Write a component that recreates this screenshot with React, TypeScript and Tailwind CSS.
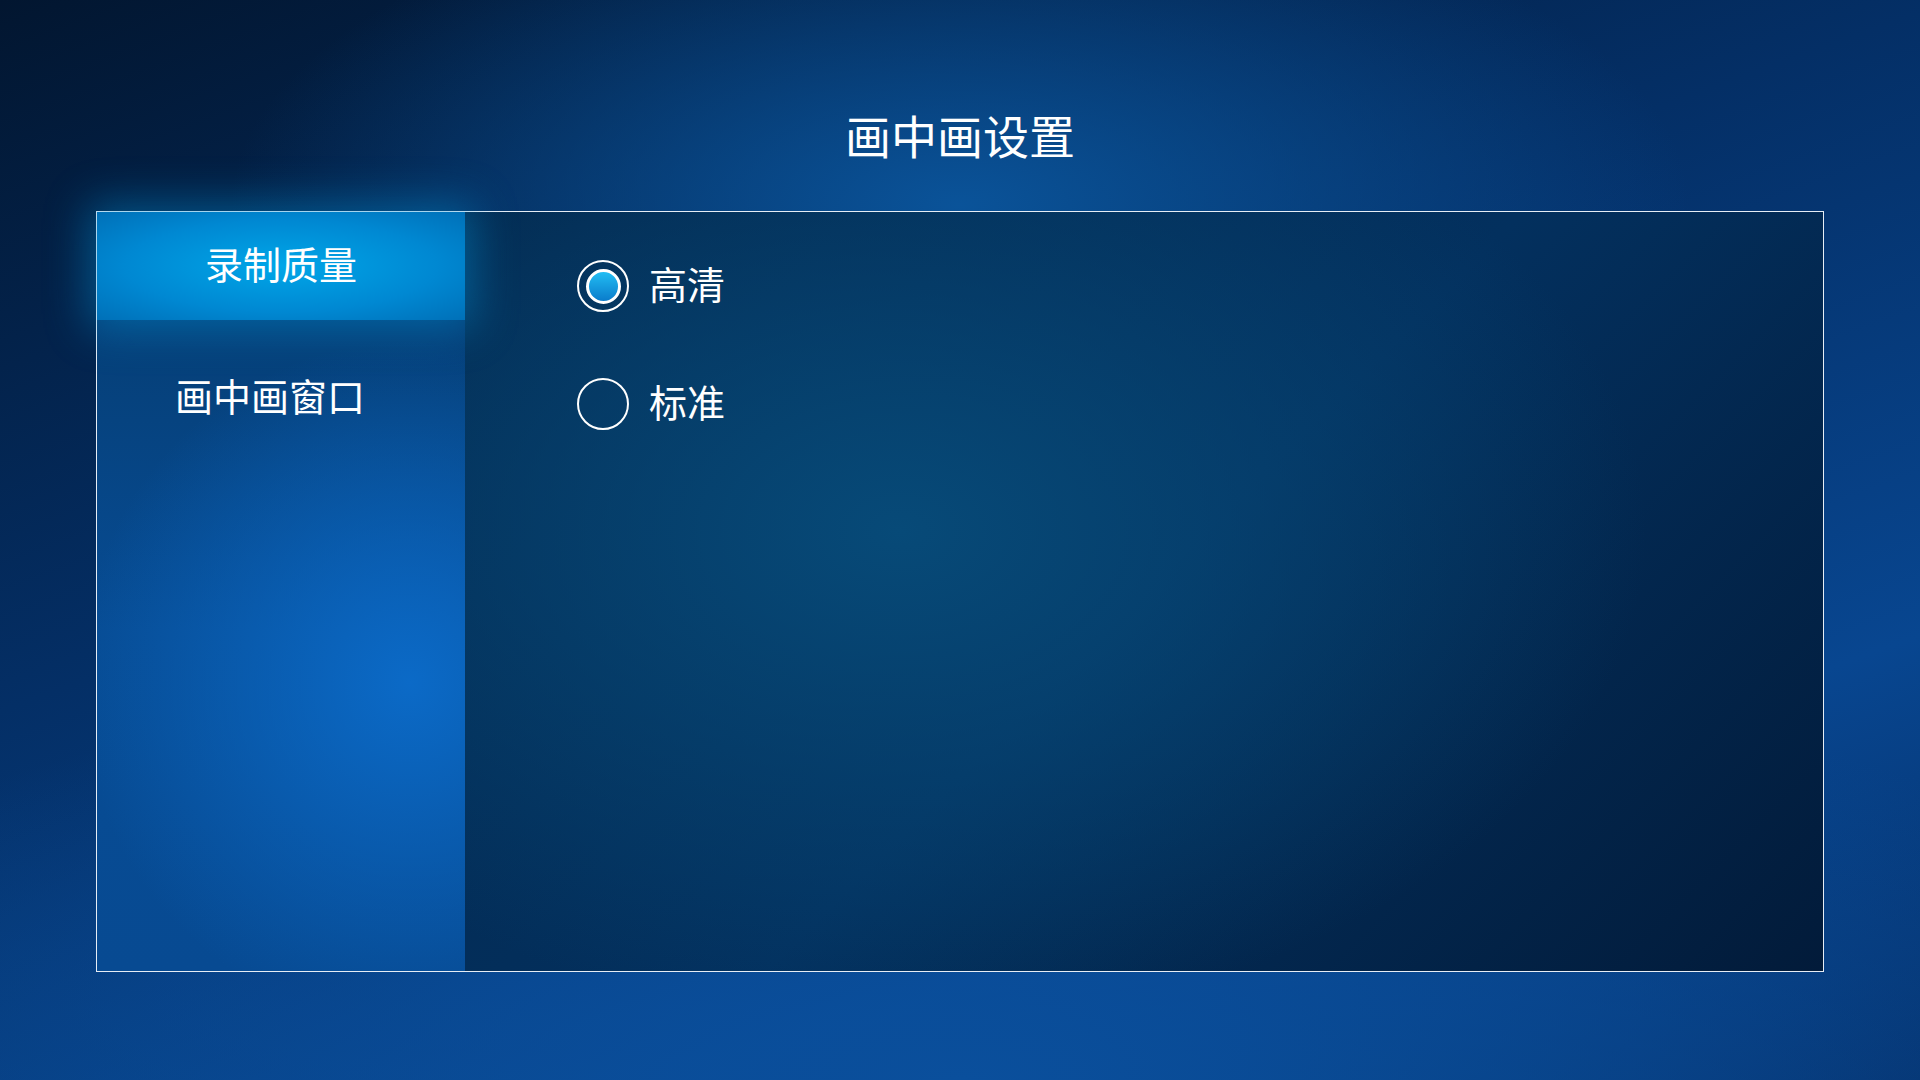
import React, { useState } from 'react';

const FONT = '"Noto Sans CJK SC", "Noto Sans", sans-serif';

const tabs = ['录制质量', '画中画窗口'];
const options = ['高清', '标准'];

const Radio = ({ checked }: { checked: boolean }) => (
  <div className="w-[52px] h-[52px] rounded-full border-[2.5px] border-white flex items-center justify-center shrink-0">
    {checked && (
      <div className="w-[35px] h-[35px] rounded-full border-[3px] border-white bg-[linear-gradient(180deg,#22bdf3_0%,#0a7ccb_100%)]" />
    )}
  </div>
);

const App: React.FC = () => {
  const [tab, setTab] = useState(0);
  const [quality, setQuality] = useState(0);

  return (
    <div
      className="w-[1920px] h-[1080px] overflow-hidden text-white bg-[radial-gradient(ellipse_38%_30%_at_50%_19%,#0a5399_0%,transparent_100%),radial-gradient(ellipse_70%_40%_at_50%_100%,#0a4f9c_0%,transparent_100%),linear-gradient(160deg,#021630_0%,#042f66_40%,#084690_75%,#05306a_100%)]"
      style={{ fontFamily: FONT }}
    >
      <h1 className="pt-[111px] pb-[3px] text-center text-[46px] leading-none font-normal mb-[51px]">画中画设置</h1>

      {/* Panel */}
      <div className="mx-[96px] h-[761px] border border-[#e6edf5] flex">
        {/* Sidebar */}
        <div className="w-[368px] flex flex-col bg-[radial-gradient(ellipse_90%_45%_at_85%_62%,#0b6ac7_0%,transparent_100%),linear-gradient(180deg,#053a6c_0%,#074c94_55%,#074a92_100%)]">
          {tabs.map((t, i) => {
            const active = i === tab;
            return (
              <button
                key={t}
                onClick={() => setTab(i)}
                className={
                  active
                    ? 'relative z-10 h-[108px] w-full flex items-center justify-center pb-[6px] text-[38px] leading-none bg-[radial-gradient(ellipse_at_center,#00a6e8_0%,#0088d2_60%,#0070b8_100%)] shadow-[0_0_44px_8px_rgba(0,150,220,0.45)]'
                    : 'h-[156px] w-full flex items-center justify-center pr-[22px] pb-[6px] text-[38px] leading-none'
                }
              >
                {t}
              </button>
            );
          })}
        </div>

        {/* Content */}
        <div className="flex-1 pl-[112px] pt-[48px] flex flex-col gap-[66px] bg-[radial-gradient(ellipse_55%_65%_at_32%_42%,#074a78_0%,transparent_100%),linear-gradient(135deg,#03284e_0%,#03305e_50%,#021b3a_100%)]">
          {options.map((o, i) => (
            <button key={o} onClick={() => setQuality(i)} className="flex items-center gap-[20px] text-[38px] leading-none">
              <Radio checked={quality === i} />
              <span className="pb-[7px]">{o}</span>
            </button>
          ))}
        </div>
      </div>
    </div>
  );
};

export default App;
